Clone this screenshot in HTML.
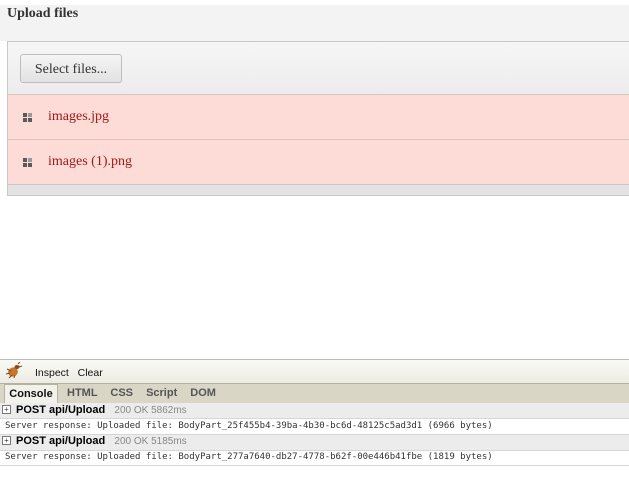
<!DOCTYPE html>
<html><head><style>
body{margin:0;width:629px;height:483px;background:#fff;position:relative;overflow:hidden;font-family:"Liberation Serif",serif}
.a{position:absolute}
.row{position:absolute;left:8px;right:0;height:44px;background:#fddcd8;border-top:1px solid #d8c4c1;color:#a0191a;font-size:14px}
.row span{position:absolute;left:40px;top:14px}
.ic{position:absolute;left:15px;top:18px;width:10px;height:10px}
.ic i{position:absolute;width:4px;height:4px;background:#5a5a5a}
.fb{font-family:"Liberation Sans","DejaVu Sans",sans-serif;font-size:11px}
.mono{font-family:"DejaVu Sans Mono","Liberation Mono",monospace;font-size:9px;color:#333}
</style></head><body>
<div class="a" style="left:0;top:5px;right:0;height:36px;background:#f3f3f3"></div>
<div class="a" style="left:7px;top:6px;font-weight:bold;font-size:14px;color:#333">Upload files</div>
<div class="a" style="left:7px;top:41px;right:0;height:153px;border:1px solid #c8c8c8;border-right:none;background:#ececec"></div>
<div class="a" style="left:8px;top:42px;right:0;height:52px;background:linear-gradient(#f6f6f6,#ececec)"></div>
<div class="a" style="left:20px;top:54px;width:100px;height:27px;border:1px solid #bdbdbd;border-radius:3px;background:linear-gradient(#f5f5f5,#e2e2e2);font-size:14px;color:#333;text-align:center;line-height:29px">Select files...</div>
<div class="row" style="top:94px"><div class="ic"><i style="left:0;top:0"></i><i style="left:5px;top:0;background:#999"></i><i style="left:0;top:5px"></i><i style="left:5px;top:5px"></i></div><span>images.jpg</span></div>
<div class="row" style="top:139px"><div class="ic"><i style="left:0;top:0"></i><i style="left:5px;top:0;background:#999"></i><i style="left:0;top:5px"></i><i style="left:5px;top:5px"></i></div><span>images (1).png</span></div>
<div class="a" style="left:8px;top:184px;right:0;height:10px;background:#e3e3e3;border-top:1px solid #c8c8c8"></div>

<div class="a" style="left:0;top:359px;right:0;height:23px;background:linear-gradient(#fafaf5,#ecebe3);border-top:1px solid #bbb"></div>
<svg class="a" style="left:5px;top:362px" width="18" height="17" viewBox="0 0 18 17"><ellipse cx="8" cy="10" rx="5" ry="4.5" fill="#c8762a" transform="rotate(-35 8 10)"/><ellipse cx="12" cy="5" rx="2.5" ry="2" fill="#8a4a1a"/><path d="M2 7 L6 9 M1 12 L5 11 M4 16 L7 13 M9 16 L10 13 M13 2 L15 0 M14 5 L17 4" stroke="#7a4a20" stroke-width="1"/></svg>
<div class="a fb" style="left:35px;top:367px;color:#111;font-size:10.5px">Inspect&nbsp;&nbsp; Clear</div>
<div class="a" style="left:0;top:383px;right:0;height:19px;background:#d9d6c6;border-top:1px solid #b5b29f;border-bottom:1px solid #b5b29f"></div>
<div class="a fb" style="left:4px;top:384px;width:52px;height:19px;background:#f2f1ea;border:1px solid #b5b29f;border-bottom:none;font-weight:bold;text-align:center;line-height:18px;color:#111">Console</div>
<div class="a fb" style="left:67px;top:387px;font-weight:bold;color:#555;word-spacing:10px">HTML CSS Script DOM</div>
<div class="a" style="left:0;top:403px;right:0;height:15px;background:#ececec;border-bottom:1px solid #d6d6d6"></div>
<div class="a" style="left:0;top:434px;right:0;height:15px;background:#ececec;border-top:1px solid #d6d6d6;border-bottom:1px solid #d6d6d6"></div>
<div class="a" style="left:0;top:465px;right:0;height:1px;background:#d6d6d6"></div>
<div class="a" style="left:2px;top:405px;width:7px;height:7px;border:1px solid #777;background:#fff;font-size:8px;line-height:7px;text-align:center">+</div>
<div class="a fb" style="left:16px;top:404px"><b style="color:#000">POST api/Upload</b>&nbsp;&nbsp; <span style="color:#888;font-size:10px">200 OK 5862ms</span></div>
<div class="a mono" style="left:5px;top:421px">Server response: Uploaded file: BodyPart_25f455b4-39ba-4b30-bc6d-48125c5ad3d1 (6966 bytes)</div>
<div class="a" style="left:2px;top:436px;width:7px;height:7px;border:1px solid #777;background:#fff;font-size:8px;line-height:7px;text-align:center">+</div>
<div class="a fb" style="left:16px;top:435px"><b style="color:#000">POST api/Upload</b>&nbsp;&nbsp; <span style="color:#888;font-size:10px">200 OK 5185ms</span></div>
<div class="a mono" style="left:5px;top:452px">Server response: Uploaded file: BodyPart_277a7640-db27-4778-b62f-00e446b41fbe (1819 bytes)</div>
</body></html>
